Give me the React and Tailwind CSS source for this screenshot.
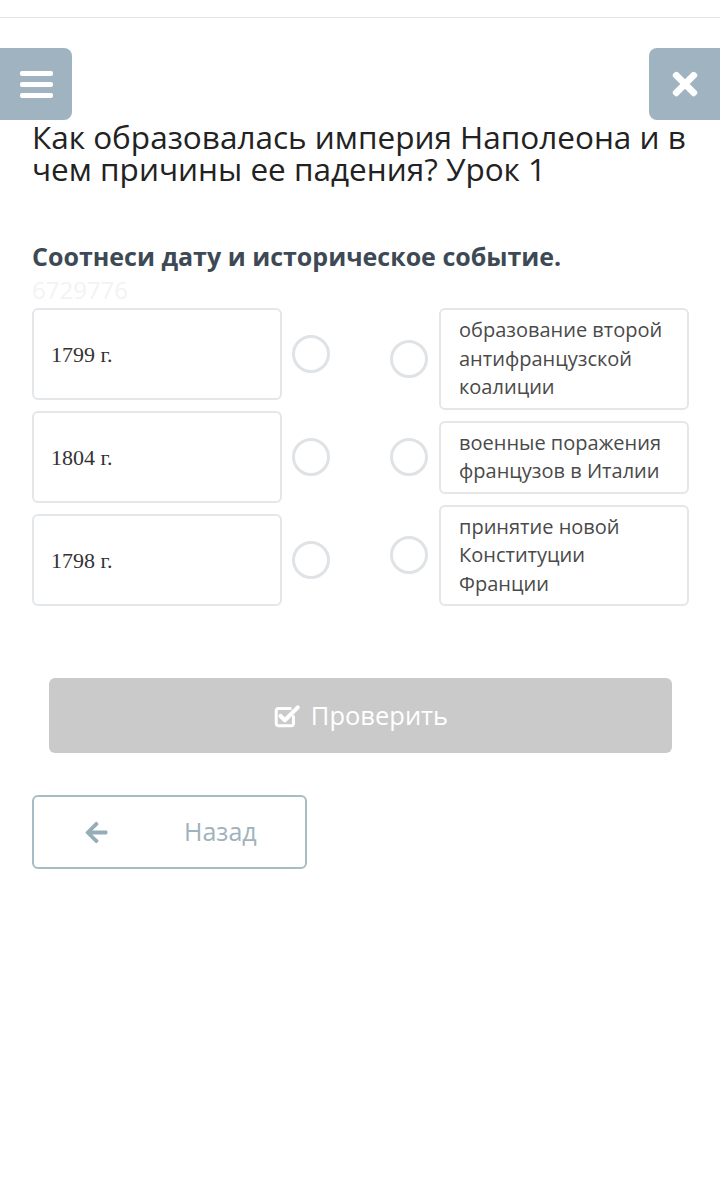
import React from 'react';
import { FaTimes, FaArrowLeft } from 'react-icons/fa';

const dates = ['1799 г.', '1804 г.', '1798 г.'];

const events = [
  ['образование второй', 'антифранцузской', 'коалиции'],
  ['военные поражения', 'французов в Италии'],
  ['принятие новой', 'Конституции', 'Франции'],
];

const Radio = () => (
  <div className="w-[38px] h-[38px] rounded-full border-[3px] border-[#dfe3e6] bg-white shrink-0"></div>
);

const CheckSquare = () => (
  <svg width="28" height="26" viewBox="0 0 26 24" fill="none">
    <path d="M19 12.5V19a2 2 0 0 1-2 2H5a2 2 0 0 1-2-2V7a2 2 0 0 1 2-2h11" stroke="white" strokeWidth="2.8" strokeLinecap="round" />
    <path d="M7 12l4 4L23 4" stroke="white" strokeWidth="3.8" strokeLinecap="round" strokeLinejoin="round" />
  </svg>
);

const App = () => {
  return (
    <div className="min-h-[1190px] bg-white" style={{ fontFamily: '"Open Sans", "Noto Sans", sans-serif' }}>
      {/* top strip */}
      <div className="h-[18px] border-b border-[#e2e2e2]"></div>

      {/* header buttons */}
      <div className="flex justify-between mt-[30px]">
        <div className="w-[72px] h-[72px] bg-[#9fb4c0] rounded-r-[8px] flex flex-col justify-center items-center gap-[6px]">
          <div className="w-[33px] h-[5px] bg-white rounded-[2px]"></div>
          <div className="w-[33px] h-[5px] bg-white rounded-[2px]"></div>
          <div className="w-[33px] h-[5px] bg-white rounded-[2px]"></div>
        </div>
        <div className="w-[71px] h-[72px] bg-[#9fb4c0] rounded-l-[8px] flex items-center justify-center">
          <FaTimes className="text-white" size={36} />
        </div>
      </div>

      <div className="pl-[32px] pr-[31px]">
        <h1 className="text-[31.5px] leading-[32px] text-[#222] mt-[1px]">
          Как образовалась империя Наполеона и в чем причины ее падения? Урок 1
        </h1>

        <h2 className="mt-[56px] text-[25px] leading-[30px] font-bold text-[#3d4954]">
          Соотнеси дату и историческое событие.
        </h2>
        <div className="text-[24px] leading-[30px] text-[#f3f3f3] mt-[4px]">6729776</div>

        {/* matching area */}
        <div className="flex justify-between mt-[3px]">
          <div className="flex flex-col gap-[11px]">
            {dates.map((d) => (
              <div key={d} className="flex items-center">
                <div
                  className="w-[250px] h-[92px] border-2 border-[#e3e7ea] rounded-[6px] flex items-center pl-[17px] text-[22px] text-[#333]"
                  style={{ fontFamily: '"Liberation Serif", "DejaVu Serif", serif' }}
                >
                  {d}
                </div>
                <div className="ml-[10px]">
                  <Radio />
                </div>
              </div>
            ))}
          </div>

          <div className="flex flex-col gap-[11px]">
            {events.map((lines, i) => (
              <div key={i} className="flex items-center">
                <div className="mr-[11px]">
                  <Radio />
                </div>
                <div className="w-[250px] border-2 border-[#e3e7ea] rounded-[6px] pl-[18px] pr-[8px] py-[6px] text-[20px] leading-[28.5px] text-[#4a4a4a]">
                  {lines.map((l) => (
                    <div key={l}>{l}</div>
                  ))}
                </div>
              </div>
            ))}
          </div>
        </div>

        {/* check */}
        <div className="mt-[72px] ml-[17px] mr-[17px] h-[75px] bg-[#cacaca] rounded-[6px] flex items-center justify-center gap-[10px] text-white text-[25.5px]">
          <CheckSquare />
          <span>Проверить</span>
        </div>

        {/* back */}
        <div className="mt-[42px] w-[275px] h-[74px] border-2 border-[#a8bcc6] rounded-[6px] flex items-center pl-[50px] text-[25px] text-[#a0b2bb]">
          <FaArrowLeft className="text-[#95acb9]" size={25} />
          <span className="ml-[75px]">Назад</span>
        </div>
      </div>
    </div>
  );
};

export default App;
